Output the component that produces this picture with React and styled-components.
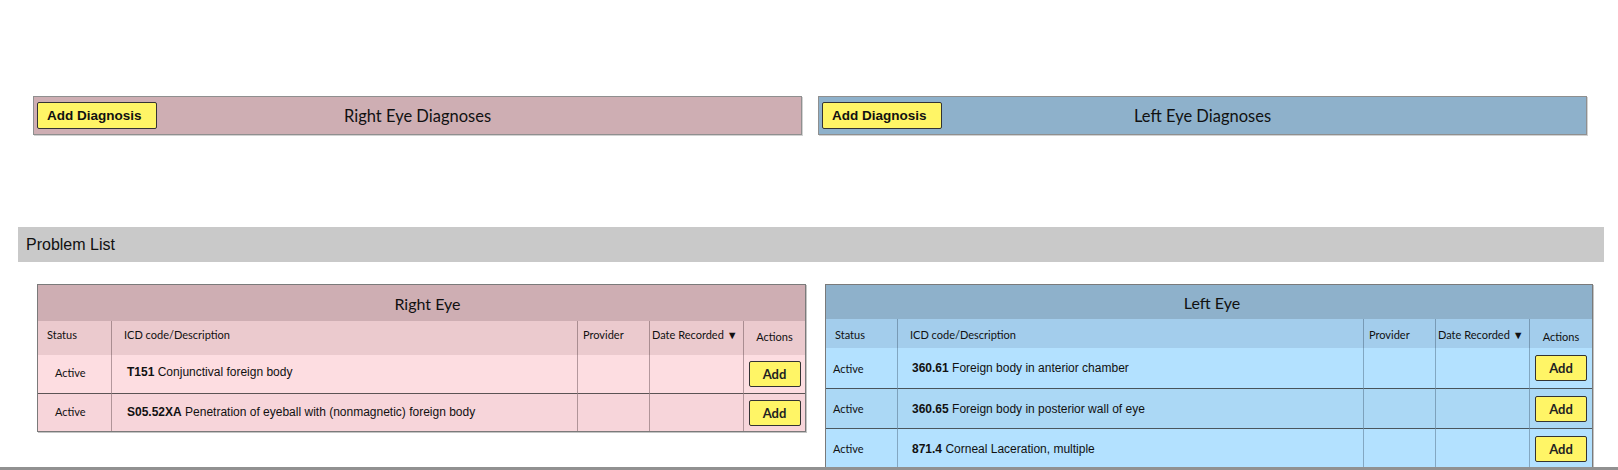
import React from "react";
import styled, { createGlobalStyle } from "styled-components";

const GlobalStyle = createGlobalStyle`
  html, body {
    margin: 0;
    padding: 0;
    background: #fff;
  }
  body {
    font-family: Lato, "Liberation Sans", sans-serif;
    color: #111;
  }
`;

const eyes = {
  right: {
    title: "Right Eye",
    titleShift: 12,
    bar: "#ceaeb3",
    head: "#ebcace",
    rows: ["#fddde1", "#f7d5da"],
    line: "rgba(70, 50, 55, 0.4)",
    cols: "73px 466px 72px 94px 1fr",
    width: 769,
    titleH: 36,
    headH: 34,
    headPad: 6,
    rowH: 38,
    rowLift: 4,
    statusPad: 17,
    descPad: 15,
    problems: [
      { code: "T151", text: "Conjunctival foreign body" },
      { code: "S05.52XA", text: "Penetration of eyeball with (nonmagnetic) foreign body" },
    ],
  },
  left: {
    title: "Left Eye",
    titleShift: 6,
    bar: "#8eb1cb",
    head: "#a3cdec",
    rows: ["#b3e1ff", "#abd8f5"],
    line: "rgba(40, 60, 80, 0.35)",
    cols: "71px 466px 72px 94px 1fr",
    width: 768,
    titleH: 34,
    headH: 29,
    headPad: 8,
    rowH: 40,
    rowLift: 0,
    statusPad: 7,
    descPad: 14,
    problems: [
      { code: "360.61", text: "Foreign body in anterior chamber" },
      { code: "360.65", text: "Foreign body in posterior wall of eye" },
      { code: "871.4", text: "Corneal Laceration, multiple" },
    ],
  },
};

const Page = styled.div`
  height: 470px;
  box-sizing: border-box;
  padding-top: 96px;
  border-bottom: 3px solid #919191;
  overflow: hidden;
`;

const DiagnosesRow = styled.div`
  display: flex;
  gap: 16px;
  padding-left: 33px;
`;

const DiagnosesBar = styled.div`
  width: 769px;
  height: 39px;
  box-sizing: border-box;
  background: ${(p) => p.$bg};
  border: 1px solid #8f8f8f;
  box-shadow: 1px 1px 0 #d2d2d2;
  display: grid;
  grid-template-columns: 1fr auto 1fr;
  align-items: center;
  padding: 0 3px;
`;

const AddDiagnosis = styled.button`
  justify-self: start;
  width: 120px;
  height: 27px;
  padding: 0 0 0 9px;
  text-align: left;
  background: #fff566;
  border: 1.5px solid #333;
  border-radius: 2px;
  font-family: "Liberation Sans", Arial, sans-serif;
  font-weight: 700;
  font-size: 13.5px;
  color: #111;
  cursor: pointer;
`;

const BarTitle = styled.div`
  font-size: 16.5px;
  color: #111;
`;

const ProblemBar = styled.div`
  margin: 92px 0 0 18px;
  width: 1586px;
  height: 35px;
  box-sizing: border-box;
  background: #c9c9c9;
  display: flex;
  align-items: center;
  padding-left: 8px;
  font-family: "Liberation Sans", Arial, sans-serif;
  font-size: 16px;
  color: #111;
`;

const TablesRow = styled.div`
  display: flex;
  align-items: flex-start;
  gap: 19px;
  margin-top: 22px;
  padding-left: 37px;
`;

const Table = styled.div`
  width: ${(p) => p.$width}px;
  box-sizing: border-box;
  display: grid;
  grid-template-columns: ${(p) => p.$cols};
  border: 1px solid #7a7a7a;
  box-shadow: 1px 1px 0 #c4c4c4;
`;

const TitleRow = styled.div`
  grid-column: 1 / -1;
  height: ${(p) => p.$h}px;
  box-sizing: border-box;
  background: ${(p) => p.$bg};
  display: flex;
  align-items: center;
  justify-content: center;
  padding-left: ${(p) => p.$shift}px;
  font-size: 16px;
  color: #111;
`;

const HeadCell = styled.div`
  height: ${(p) => p.$h}px;
  box-sizing: border-box;
  background: ${(p) => p.$bg};
  border-left: ${(p) => (p.$first ? "none" : `1px solid ${p.$line}`)};
  padding: ${(p) => (p.$center ? `${p.$top + 2}px 0 0` : `${p.$top}px 0 0 ${p.$pad}px`)};
  text-align: ${(p) => (p.$center ? "center" : "left")};
  font-size: 11px;
  line-height: 16px;
  color: #111;
  white-space: nowrap;
`;

const Cell = styled.div`
  height: ${(p) => p.$h}px;
  box-sizing: border-box;
  background: ${(p) => p.$bg};
  border-left: ${(p) => (p.$first ? "none" : `1px solid ${p.$line}`)};
  border-top: ${(p) => (p.$top ? "1px solid rgba(40, 40, 40, 0.75)" : "none")};
  display: flex;
  align-items: center;
  justify-content: ${(p) => p.$justify || "flex-start"};
  padding-left: ${(p) => p.$pad || 0}px;
  padding-bottom: ${(p) => p.$lift || 0}px;
`;

const Status = styled.span`
  font-size: 11px;
  color: #111;
`;

const Desc = styled.span`
  font-family: "Liberation Sans", Arial, sans-serif;
  font-size: 12px;
  color: #111;
  white-space: nowrap;

  b {
    font-weight: 700;
  }
`;

const AddButton = styled.button`
  width: 52px;
  height: 26px;
  padding: 0;
  background: #fff566;
  border: 1.5px solid #333;
  border-radius: 2px;
  font-family: Lato, "Liberation Sans", sans-serif;
  font-weight: 700;
  font-size: 13px;
  color: #222;
  cursor: pointer;
`;

const headers = [
  { label: "Status", pad: 9 },
  { label: "ICD code/Description", pad: 12 },
  { label: "Provider", pad: 5 },
  { label: "Date Recorded \u25BC", pad: 2 },
  { label: "Actions", center: true },
];

const EyeTable = ({ eye }) => (
  <Table $width={eye.width} $cols={eye.cols}>
    <TitleRow $h={eye.titleH} $bg={eye.bar} $shift={eye.titleShift}>
      {eye.title}
    </TitleRow>
    {headers.map((h, i) => (
      <HeadCell
        key={h.label}
        $h={eye.headH}
        $bg={eye.head}
        $line={eye.line}
        $first={i === 0}
        $pad={h.pad}
        $top={eye.headPad}
        $center={h.center}
      >
        {h.label}
      </HeadCell>
    ))}
    {eye.problems.map((p, r) => {
      const common = {
        $h: eye.rowH,
        $bg: eye.rows[r % 2],
        $line: eye.line,
        $top: r > 0,
        $lift: r === 0 ? eye.rowLift : eye.rowLift / 2,
      };
      return (
        <React.Fragment key={p.code}>
          <Cell {...common} $first $pad={eye.statusPad}>
            <Status>Active</Status>
          </Cell>
          <Cell {...common} $pad={eye.descPad}>
            <Desc>
              <b>{p.code}</b> {p.text}
            </Desc>
          </Cell>
          <Cell {...common} />
          <Cell {...common} />
          <Cell {...common} $justify="center" $lift={0}>
            <AddButton>Add</AddButton>
          </Cell>
        </React.Fragment>
      );
    })}
  </Table>
);

export default function App() {
  return (
    <>
      <GlobalStyle />
      <Page>
        <DiagnosesRow>
          <DiagnosesBar $bg={eyes.right.bar}>
            <AddDiagnosis>Add Diagnosis</AddDiagnosis>
            <BarTitle>Right Eye Diagnoses</BarTitle>
          </DiagnosesBar>
          <DiagnosesBar $bg={eyes.left.bar}>
            <AddDiagnosis>Add Diagnosis</AddDiagnosis>
            <BarTitle>Left Eye Diagnoses</BarTitle>
          </DiagnosesBar>
        </DiagnosesRow>
        <ProblemBar>Problem List</ProblemBar>
        <TablesRow>
          <EyeTable eye={eyes.right} />
          <EyeTable eye={eyes.left} />
        </TablesRow>
      </Page>
    </>
  );
}
